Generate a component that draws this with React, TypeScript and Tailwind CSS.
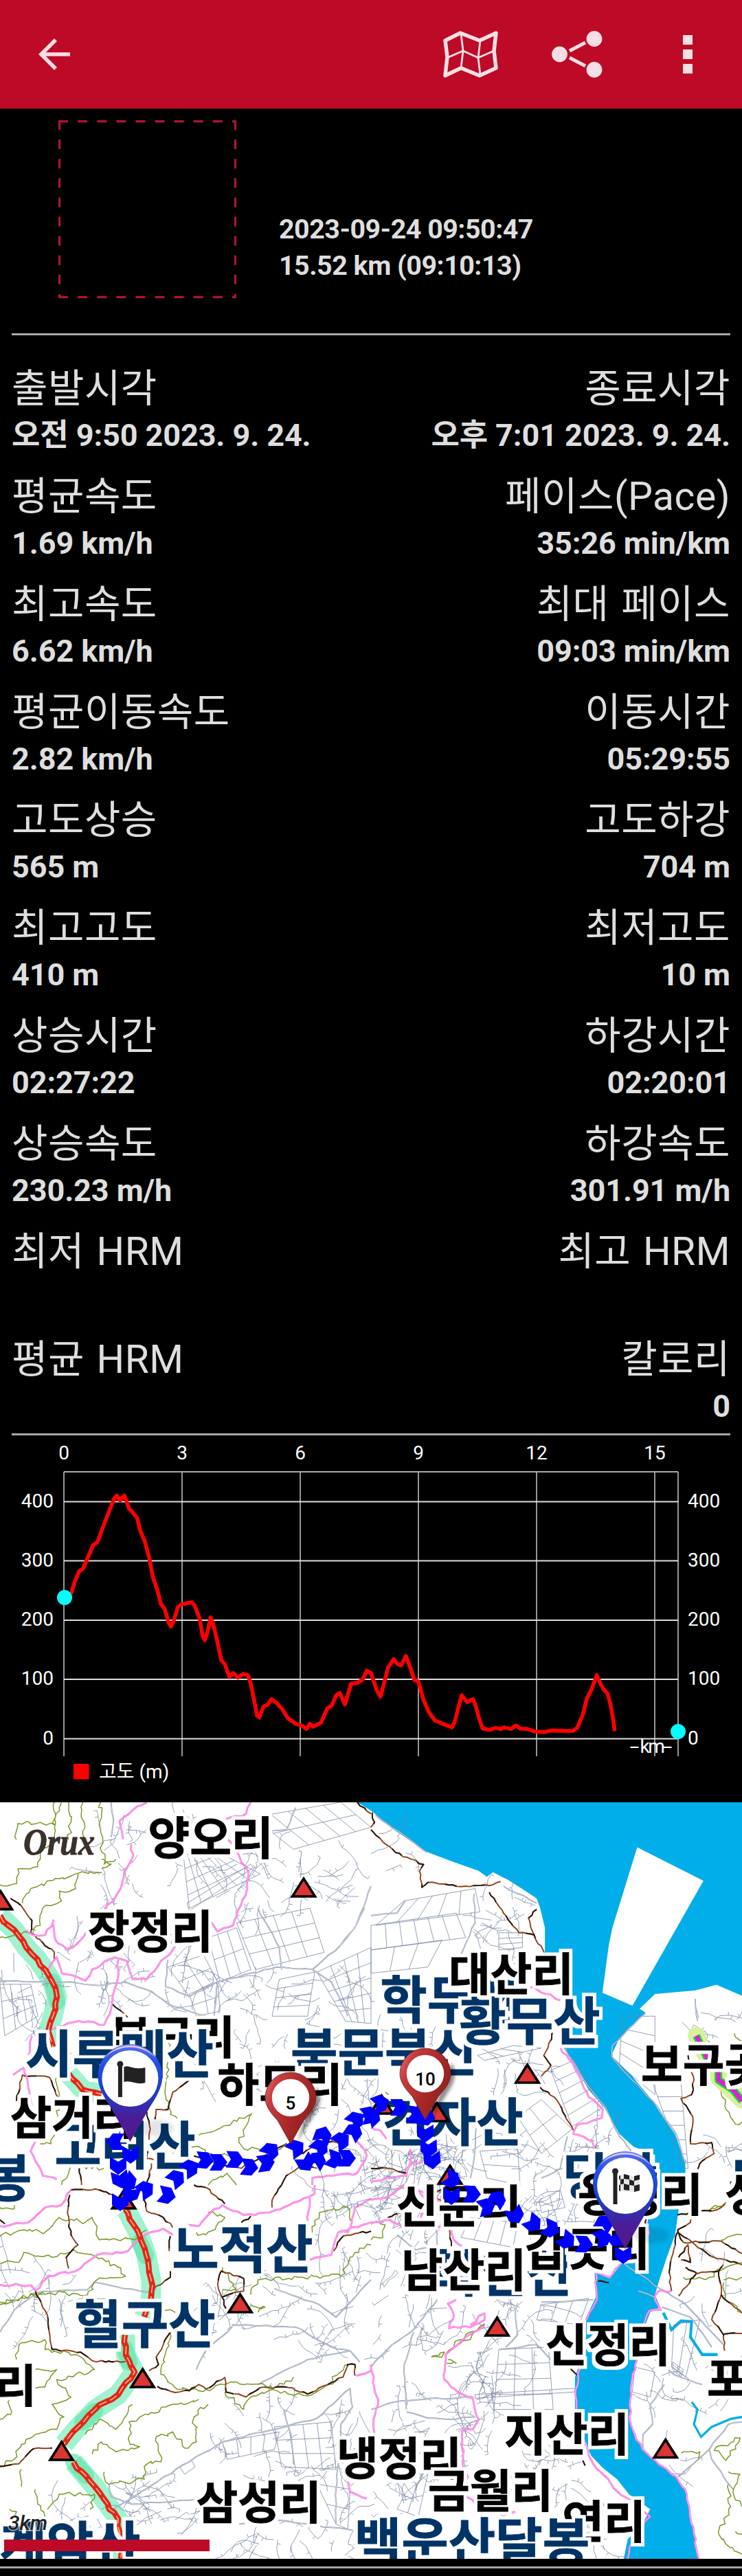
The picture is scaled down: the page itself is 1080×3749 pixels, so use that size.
import React from "react";

type Pt = [number, number];

/* ---------- helpers for the hand-drawn map geometry ---------- */

function makeRandom(seed: number) {
  let s = seed;
  return () => {
    s = (s * 16807) % 2147483647;
    return s / 2147483647;
  };
}

function toPoints(text: string): Pt[] {
  return text.split(" ").map((p) => p.split(",").map(Number) as Pt);
}

/** Turns a coarse polyline into an irregular one, like a path in the hills. */
function wiggle(text: string, amp: number, step = 22): string {
  const pts = toPoints(text);
  const rnd = makeRandom(Math.round(pts[0][0] * 7 + pts[0][1] * 13 + 911));
  let d = `M${pts[0][0]},${pts[0][1]}`;
  for (let i = 1; i < pts.length; i++) {
    const [ax, ay] = pts[i - 1];
    const [bx, by] = pts[i];
    const n = Math.max(1, Math.round(Math.hypot(bx - ax, by - ay) / step));
    for (let k = 1; k <= n; k++) {
      const t = k / n;
      const j = k === n ? 0 : amp;
      const x = ax + (bx - ax) * t + (rnd() - 0.5) * 2 * j;
      const y = ay + (by - ay) * t + (rnd() - 0.5) * 2 * j;
      d += `L${x.toFixed(1)},${y.toFixed(1)}`;
    }
  }
  return d;
}

/** Rice-field grid spanned between four corners. */
function grid(corners: string, n: number, m: number): string {
  const [a, b, c, e] = toPoints(corners);
  const mix = (p: Pt, q: Pt, t: number): Pt => [p[0] + (q[0] - p[0]) * t, p[1] + (q[1] - p[1]) * t];
  let d = "";
  for (let i = 0; i <= n; i++) {
    const p = mix(a, b, i / n);
    const q = mix(e, c, i / n);
    d += `M${p[0].toFixed(1)},${p[1].toFixed(1)}L${q[0].toFixed(1)},${q[1].toFixed(1)}`;
  }
  for (let i = 0; i <= m; i++) {
    const p = mix(a, e, i / m);
    const q = mix(b, c, i / m);
    d += `M${p[0].toFixed(1)},${p[1].toFixed(1)}L${q[0].toFixed(1)},${q[1].toFixed(1)}`;
  }
  return d;
}

/** Village lanes: short branching strokes scattered in a box. */
function lanes(x: number, y: number, w: number, h: number, count: number, seed: number): string {
  const rnd = makeRandom(seed * 7919);
  let d = "";
  for (let i = 0; i < count * 0.8; i++) {
    let px = x + rnd() * w;
    let py = y + rnd() * h;
    let a = rnd() * Math.PI * 2;
    d += `M${px.toFixed(1)},${py.toFixed(1)}`;
    const n = 3 + Math.floor(rnd() * 5);
    for (let k = 0; k < n; k++) {
      a += (rnd() - 0.5) * 1.1;
      const l = 10 + rnd() * 26;
      px += Math.cos(a) * l;
      py += Math.sin(a) * l;
      d += `L${px.toFixed(1)},${py.toFixed(1)}`;
      if (rnd() > 0.6) {
        const b = a + (rnd() > 0.5 ? 1.5 : -1.5);
        d += `l${(Math.cos(b) * 14).toFixed(1)},${(Math.sin(b) * 14).toFixed(1)}M${px.toFixed(1)},${py.toFixed(1)}`;
      }
    }
  }
  return d;
}

/* The map sheet is made of four tiles, each with its own units. */
const NW = "matrix(0.3444 0 0 0.3571 0 -3)";
const NE = "matrix(0.3444 0 0 0.3571 540 -3)";
const SW = "matrix(0.3444 0 0 0.36288 0 557)";
const SE = "matrix(0.3444 0 0 0.36288 540 557)";

type Tile = {
  t: string;
  fields: string[];
  olive: string[];
  brown: string[];
  pink: string[];
  road: string[];
};

const TILES: Tile[] = [
  {
    t: NW,
    fields: [
      grid("775,225 880,190 1100,300 800,440", 6, 4),
      grid("790,420 1060,260 1070,275 800,450", 1, 1),
      grid("1000,500 1310,440 1370,620 1080,690", 4, 3),
      grid("1070,70 1440,8 1568,110 1240,200", 5, 2),
      grid("1340,700 1568,600 1568,910 1460,900", 4, 5),
      grid("1180,730 1330,700 1300,880 1150,880", 1, 4),
      grid("800,790 920,740 930,860 830,880", 2, 2),
      grid("0,750 130,750 160,880 20,960", 3, 3),
      grid("880,560 1000,520 1060,690 930,740", 3, 2),
      grid("710,680 860,630 920,740 800,800", 2, 2),
      lanes(420, 20, 500, 420, 34, 11),
      lanes(900, 200, 620, 260, 44, 12),
      lanes(270, 470, 650, 400, 46, 13),
      lanes(900, 720, 650, 300, 46, 14),
      lanes(0, 640, 180, 380, 18, 15),
      lanes(800, 1050, 760, 230, 30, 16),
      lanes(1320, 1380, 240, 180, 14, 17),
    ],
    olive: [
      "0,345 70,340 75,280 160,270 170,220 230,160 235,90 260,10",
      "70,160 75,95 170,90 230,100 230,8",
      "290,160 300,90 290,8",
      "350,8 355,170",
      "425,8 425,130 440,260 490,240",
      "95,420 130,360 250,320 320,300 430,295",
      "140,540 170,510 180,440 260,410 250,370 320,360 330,300",
      "430,280 470,260 430,240",
      "0,560 90,545 150,530",
      "300,1030 290,1090",
      "700,970 720,1000 700,1160 720,1280 770,1300",
      "1065,1275 1010,1395 1030,1420 1160,1430 1210,1400",
      "840,1365 900,1350 960,1325 1060,1280",
      "240,1130 245,1290 215,1400 170,1400",
      "260,1568 300,1490 440,1500",
      "730,1440 800,1400 890,1440 1000,1450",
      "880,1568 960,1520 1000,1568",
    ],
    brown: [
      "45,400 90,430 135,490 130,540 180,580 230,620 230,650",
      "475,830 540,885",
      "70,1225 95,1120 210,1130 245,1210",
      "800,1140 730,1190 710,1260 660,1260 655,1300",
      "620,1270 635,1340 620,1460 650,1465",
      "620,1568 640,1480",
      "335,1500 345,1568",
      "820,1450 920,1480 1020,1500 1210,1400 1280,1440 1350,1390 1470,1400",
      "1510,8 1568,55",
      "1190,1568 1210,1530 1280,1490 1340,1500",
    ],
    pink: [
      "620,10 580,25 505,85 520,160",
      "555,180 560,235 525,290 510,360 480,410 440,445",
      "1060,8 1040,55 945,80",
      "955,140 1000,210 1050,290 1045,360 1005,450 985,510 920,535 885,490",
      "110,530 140,550 190,550 225,490 235,570 280,605 320,590 400,500",
      "205,690 240,640 260,705 360,735 390,690 485,640 535,655 560,730 620,730 700,640 740,595",
      "500,650 495,740 475,820 465,870 440,915 330,900 205,935",
      "135,960 120,1040",
      "55,1120 100,1090 130,1230 150,1270",
      "150,1390 130,1430 180,1530 240,1545",
      "1500,1370 1550,1450 1510,1520 1320,1540 1320,1568",
    ],
    road: [
      "0,735 130,740 300,740 420,755 530,740 640,780 710,830 870,880",
      "710,650 700,760 800,800 920,740 1170,680 1320,690 1440,590 1500,520 1568,350",
      "1090,440 1180,600 1190,690",
      "1440,590 1510,500 1540,440",
      "920,740 905,880",
      "1320,690 1400,740 1470,880",
      "1060,70 1095,130 1210,120 1250,30",
      "470,8 480,80 470,150",
    ],
  },
  {
    t: NE,
    fields: [
      grid("0,510 360,460 400,560 0,610", 6, 1),
      grid("140,410 440,360 460,455 20,510", 5, 1),
      grid("0,610 300,570 240,680 0,705", 3, 1),
      grid("1060,880 1200,880 1200,1200 1050,1080", 1, 4),
      grid("1190,1150 1310,1150 1340,1500 1320,1500", 1, 6),
      grid("760,1100 860,1060 980,1250 850,1330", 1, 5),
      grid("620,1290 720,1220 850,1340 720,1440", 2, 2),
      grid("450,1040 600,1000 720,1010 480,1060", 3, 1),
      grid("460,1430 620,1420 630,1568 490,1540", 1, 2),
      grid("540,540 640,540 640,600 540,610", 1, 3),
      lanes(440, 380, 180, 230, 20, 21),
      lanes(0, 880, 350, 250, 20, 22),
      lanes(500, 1040, 280, 160, 16, 23),
      lanes(0, 1400, 420, 165, 80, 24),
      lanes(640, 1380, 400, 180, 22, 25),
      lanes(1230, 830, 320, 150, 8, 26),
      lanes(1400, 1380, 150, 60, 8, 27),
      lanes(0, 120, 150, 200, 6, 28),
    ],
    olive: [
      "1535,950 1568,985",
      "1480,1170 1500,1260 1540,1320 1568,1310",
      "60,1190 75,1200",
    ],
    brown: [
      "0,120 50,170 135,230 222,262 205,290 215,355 240,335 380,352 500,348 548,332",
      "500,375 560,460 625,540 690,550 735,628",
      "700,445 665,480 690,550",
      "775,935 730,1040 760,1080 720,1125",
      "715,1170 775,1210 855,1345",
      "0,1500 60,1498 150,1520",
      "1340,1040 1365,1140 1355,1200 1310,1215 1360,1290 1350,1400 1440,1395 1450,1440 1400,1470 1375,1515",
      "5,50 15,90 0,110",
      "1390,965 1435,990",
    ],
    pink: [
      "640,760 700,770 800,815",
      "800,1005 860,1090 920,1210 980,1260 975,1295 870,1325 855,1360 935,1390 945,1420",
      "0,1335 40,1345 65,1380",
      "170,1410 165,1480 150,1530 0,1555",
      "250,1005 285,1010",
      "160,1490 220,1470",
    ],
    road: [
      "20,60 235,212",
      "560,350 700,420",
      "820,1010 900,1140 990,1250 1050,1370 1100,1430",
      "1160,868 1020,1000 1020,1050 1190,1225 1290,1360 1330,1480",
      "0,470 110,460 145,410",
      "435,380 440,500 380,630",
      "1370,810 1380,900",
      "830,1370 800,1500 720,1540",
      "445,1330 440,1420 420,1540",
    ],
  },
  {
    t: SW,
    fields: [
      grid("1160,970 1400,950 1420,1140 1190,1130", 4, 3),
      grid("1340,1200 1480,1220 1470,1380 1420,1360", 1, 2),
      grid("760,1130 810,1105 825,1130 780,1160", 1, 1),
      grid("940,1030 1180,990 1160,1060 960,1100", 4, 1),
      lanes(850, 360, 700, 360, 60, 31),
      lanes(940, 900, 620, 290, 50, 32),
      lanes(520, 1170, 330, 180, 32, 33),
      lanes(0, 350, 420, 180, 22, 34),
      lanes(1000, 1350, 500, 140, 26, 35),
      lanes(1350, 0, 210, 140, 14, 36),
      lanes(250, 1290, 200, 60, 10, 37),
    ],
    olive: [
      "0,90 60,95 60,70 0,60",
      "0,205 100,180 190,190 250,130 360,150 390,130 420,220 480,215 570,220 620,180",
      "0,315 80,310 100,270 220,290 310,260 390,280 500,330 530,365 410,380 370,440 180,430 0,470",
      "0,480 90,450 180,440",
      "70,700 80,640 190,620 190,660 320,680 400,740 240,780 300,850 220,880 270,930 240,980 150,1000 90,1040 60,1100 0,1130",
      "150,740 240,740 190,810 150,815",
      "40,860 45,920 0,940",
      "640,480 740,510 680,760 750,820 870,820 1000,790 1170,810 1240,770",
      "840,860 700,890 545,950 550,1040 590,1050 490,1070 430,1030 390,1080",
      "880,880 820,930 830,1030 780,1055 730,990 660,1010 680,1110 620,1120 610,1180 460,1200 440,1150",
      "150,1220 160,1280 190,1330",
      "200,1300 250,1240 400,1240 380,1300",
      "40,1300 70,1310 60,1330",
      "1060,440 1090,380 1280,370 1440,365 1500,270 1568,240",
      "940,330 1000,420 940,420",
      "1060,480 1120,490 1090,510",
      "1320,190 1350,110 1470,90 1490,150",
      "830,190 870,200 950,130 880,110",
      "950,830 1030,900 1060,850 1170,825 1300,845 1390,800 1470,720",
      "90,1140 90,1210",
      "560,880 490,980 420,940 360,1000",
    ],
    brown: [
      "295,40 285,110 300,200 330,240 280,290 290,335",
      "150,425 200,520 220,660 340,670 390,705 530,708",
      "0,1128 80,1118 140,1058 220,1055",
      "665,808 740,832 800,825 840,800 870,818 950,772 955,830 1040,850 1100,812 1220,812 1300,838 1450,770 1470,720 1500,720 1500,765",
      "720,590 690,640 660,690 670,720 630,745",
      "720,345 720,370 650,415",
      "610,40 620,105 690,130 730,170",
      "720,205 715,265",
      "955,495 920,400 935,345 1030,375 1030,425 935,450",
      "1190,0 1150,60 1150,90",
      "820,0 870,10 950,75",
      "1020,150 1060,125",
      "1568,185 1450,205 1410,265",
      "300,20 420,20 480,40",
      "0,140 20,155",
    ],
    pink: [
      "0,165 120,150 190,90 260,80 300,20",
      "0,400 130,402 150,422 210,365 330,340 410,280 540,265 620,195 690,175 730,200",
      "795,160 840,165 890,110 940,80 1030,120 1140,110 1330,35 1330,0",
      "1300,145 1310,40",
      "1568,55 1500,90 1470,190 1430,190 1400,280 1310,300",
      "1430,190 1568,150",
      "1505,765 1568,745",
      "1470,1180 1480,1230 1550,1258",
    ],
    road: [
      "0,590 60,500 160,430 370,420 400,390 620,430 660,415",
      "980,560 1250,570 1400,650 1480,665 1520,710",
      "1480,815 1340,935 940,1030 800,1110 460,1310",
      "1480,815 1490,890 1440,960 1420,1220 1420,1360",
      "460,1200 470,1250 560,1280 830,1260",
      "1010,1360 1180,1345 1490,1385",
      "1160,415 1260,450 1350,480 1420,530 1568,380",
      "830,740 870,660 980,570",
      "1200,900 1230,1000 1240,1120",
      "1090,800 1300,700 1480,665",
    ],
  },
  {
    t: SE,
    fields: [
      grid("540,660 750,650 770,900 520,900", 3, 4),
      grid("440,840 860,815 860,830 440,855", 4, 1),
      grid("420,130 620,150 600,250 380,210", 4, 1),
      grid("720,480 920,455 880,560 700,540", 3, 1),
      grid("710,60 800,20 820,90 720,110", 2, 2),
      grid("1280,560 1390,540 1330,770 1270,730", 2, 1),
      grid("1115,730 1200,750 1180,850 1105,830", 1, 1),
      grid("150,1230 240,1160 200,1330 110,1300", 2, 2),
      grid("1275,710 1320,740 1310,770 1275,740", 2, 3),
      lanes(0, 0, 330, 110, 50, 41),
      lanes(20, 160, 240, 300, 26, 42),
      lanes(0, 480, 320, 180, 16, 43),
      lanes(480, 480, 240, 240, 26, 44),
      lanes(100, 850, 460, 160, 40, 45),
      lanes(380, 720, 160, 130, 18, 46),
      lanes(620, 1040, 230, 200, 24, 47),
      lanes(0, 1180, 250, 140, 20, 48),
      lanes(1150, 740, 400, 120, 20, 49),
      lanes(660, 30, 220, 120, 18, 50),
      lanes(930, 1360, 110, 110, 8, 51),
      lanes(1230, 1080, 130, 60, 4, 52),
      lanes(1330, 180, 230, 380, 8, 53),
    ],
    olive: [
      "315,680 350,650 420,620 480,560 400,600 350,645",
      "255,690 310,670 300,690 260,690",
      "325,700 360,715 320,715",
      "1310,1075 1390,1070 1385,1100",
      "1450,1065 1560,1015 1500,1105 1450,1065",
      "1510,1150 1560,1160 1530,1230 1568,1290",
      "1510,1200 1520,1290 1470,1400 1500,1440 1568,1480",
      "1540,1390 1568,1400",
      "0,150 60,160 50,210 0,220",
      "1320,370 1430,370 1500,330 1568,310",
      "1490,390 1510,470 1568,510",
      "1430,100 1500,70 1430,110",
      "1480,220 1568,200",
      "1490,380 1568,370",
    ],
    brown: [
      "330,0 260,40 130,110 70,130",
      "230,30 320,80 340,245",
      "1295,120 1350,110 1350,150 1295,180",
      "1295,180 1320,230 1480,225 1568,275",
      "1295,190 1370,240 1450,290 1568,320",
      "1295,190 1260,350 1270,425",
      "1300,290 1340,240 1350,310 1310,300",
      "1330,330 1380,355 1470,345 1490,320",
      "1375,355 1300,445",
      "1470,345 1480,440 1440,540 1490,600 1495,665",
      "1480,440 1568,515",
      "1490,598 1568,595",
      "1390,105 1460,100 1495,75",
      "960,385 1005,392",
      "840,730 875,765",
      "895,1105 905,1125",
      "1165,130 1160,160",
    ],
    pink: [
      "0,60 60,50 140,0",
      "180,0 230,60 210,130 170,170 80,140 0,155",
      "200,20 330,90 300,170 255,170 220,60",
      "340,175 350,220 385,245",
      "360,460 325,475 350,520 330,575 420,570 480,540 480,515 420,560",
      "480,565 400,610 315,680 310,780 370,835 430,855 455,940 430,980 385,985 390,1130 410,1170 375,1225 470,1300 560,1325 610,1310",
      "0,720 30,880 10,960 15,1000",
      "1060,310 1010,370 950,350 955,460 905,550 890,700 865,820 865,960 900,1020 940,1120 1060,1245 1100,1265",
      "1165,150 1175,190 1165,215",
      "1270,425 1215,425 1200,460 1225,500 1175,505 1150,570",
      "1125,700 1100,800 1095,950 1120,1020 1180,1090 1290,1170 1335,1240 1365,1400 1385,1498",
      "1140,1305 1180,1330 1145,1365 1110,1400 1085,1498",
    ],
    road: [
      "1070,315 1220,415 1330,480 1440,590 1490,640",
      "1130,425 1200,450",
      "1230,490 1350,530 1440,650",
      "0,730 90,640 180,580 280,460",
      "180,590 140,720 150,900",
      "0,900 100,870 220,860 430,850",
      "150,910 240,935 330,940 440,930",
      "540,660 700,640 760,700",
      "610,500 620,600 570,650",
      "1150,1060 1150,1000 1190,960 1180,880 1240,800",
      "1200,700 1280,760 1400,800",
      "1430,1060 1440,1100 1530,1220",
      "1568,950 1510,960 1430,1060 1300,1170",
      "720,470 940,460",
      "180,10 0,20",
      "280,180 280,240 190,260 110,200",
    ],
  },
];

type Label = { s: string; x: number; y: number; blue?: boolean; a?: "start" | "end" };

const LABELS: Label[] = [
  { s: "부근리", x: 251, y: 366 },
  { s: "시루메산", x: 174, y: 394, blue: true },
  { s: "북문북산", x: 560, y: 391, blue: true },
  { s: "고려산", x: 182, y: 527, blue: true },
  { s: "봉", x: 12, y: 574, blue: true },
  { s: "노적산", x: 353, y: 678, blue: true },
  { s: "혈구산", x: 211, y: 787, blue: true },
  { s: "계암산", x: 102, y: 1109, blue: true },
  { s: "학두산", x: 656, y: 315, blue: true },
  { s: "황무산", x: 771, y: 346, blue: true },
  { s: "견자산", x: 659, y: 493, blue: true },
  { s: "당산", x: 888, y: 573, blue: true },
  { s: "북인산", x: 732, y: 712, blue: true },
  { s: "문수산", x: 1060, y: 581, blue: true, a: "start" },
  { s: "양오리", x: 306.5, y: 76 },
  { s: "장정리", x: 219, y: 212 },
  { s: "하도리", x: 407.5, y: 435 },
  { s: "삼거리", x: 105.5, y: 483 },
  { s: "대산리", x: 744, y: 274 },
  { s: "보구곶리", x: 933, y: 406, a: "start" },
  { s: "신문리", x: 668, y: 612 },
  { s: "갑곳리", x: 855, y: 674 },
  { s: "남산리", x: 675, y: 705 },
  { s: "용정리", x: 932, y: 595 },
  { s: "성동리", x: 1055, y: 595, a: "start" },
  { s: "신정리", x: 885, y: 814 },
  { s: "지산리", x: 825, y: 944 },
  { s: "냉정리", x: 581, y: 979 },
  { s: "금월리", x: 714, y: 1026 },
  { s: "연리", x: 879, y: 1071 },
  { s: "포내리", x: 1029, y: 864, a: "start" },
  { s: "리", x: 53, y: 873, a: "end" },
  { s: "삼성리", x: 376.5, y: 1043 },
  { s: "백운산달봉", x: 687, y: 1104, blue: true },
];

const PEAKS: Pt[] = [
  [442, 107], [1, 125.6], [767.6, 378], [349.5, 712], [207.6, 821], [89.5, 927], [723.5, 746], [968.7, 923.5],
];

const PEAKS_ON_TRACK: Pt[] = [[555.5, 423], [636, 434], [655, 525], [180, 561]];

/* x, y, heading in degrees */
const ARROWS: [number, number, number][] = [
  [168, 494, 180], [190, 513, 90], [172, 529, 90], [175, 549, 80], [187, 553, 50], [190, 570, 110], [175, 582, 90],
  [212, 563, -35], [243, 572, 12], [257, 547, -40], [277, 532, -32], [298, 521, 5], [318, 524, 0], [342, 520, 2],
  [363, 531, 5], [387, 525, -8], [394, 507, -45], [431, 503, -35], [445, 525, 60], [462, 520, -60], [470, 484, -70],
  [466, 502, -40], [487, 520, 20], [497, 492, -35], [505, 518, 0], [515, 479, -55], [518, 462, -40], [538, 455, -12],
  [554, 438, -20], [542, 457, -45], [581, 444, 0], [605, 455, 10], [621, 458, 10], [619, 482, 90], [624, 504, 88],
  [629, 521, 85], [658, 549, 25], [657, 573, 90], [687, 570, 2], [708, 589, -15], [724, 577, -60], [750, 601, 65],
  [776, 613, 40], [802, 621, 25], [825, 638, 40], [850, 643, 2], [877, 634, -20], [880, 612, -60], [898, 635, 50],
  [907, 659, 90],
];

function Peak({ x, y }: { x: number; y: number }) {
  return (
    <path
      d={`M${x},${y + 4}L${x + 16.5},${y + 30}H${x - 16.5}Z`}
      fill="#dd3434"
      stroke="#000"
      strokeWidth="3.6"
    />
  );
}

function EndPin({ x, y, children }: { x: number; y: number; children: React.ReactNode }) {
  return (
    <g transform={`translate(${x} ${y})`}>
      <ellipse cx="38" cy="72" rx="26" ry="12" fill="#000" opacity="0.1" filter="url(#soft)" />
      <path d="M-47,-3A47,47 0 1 1 47,-3C47,14 36,30 29,41L0,92L-29,41C-36,30 -47,14 -47,-3Z" fill="url(#pinBlue)" />
      <path d="M-38,-29A47,47 0 0 1 38,-29A52,52 0 0 0 -38,-29Z" fill="#e3c4f4" />
      <circle r="41" fill="#fff" />
      <rect x="-17.500" y="-18" width="6" height="45" fill="#222" />
      <circle cx="-14.500" cy="-21" r="4.500" fill="#222" />
      {children}
    </g>
  );
}

function KmPin({ x, y, n }: { x: number; y: number; n: string }) {
  return (
    <g transform={`translate(${x} ${y})`}>
      <path d="M10,64L36,22C44,8 46,-4 38,-16L20,30Z" fill="#000" opacity="0.45" filter="url(#soft)" />
      <path d="M-37,0A37,37 0 1 1 37,0C37,14 26,25 19,33L0,67L-19,33C-26,25 -37,14 -37,0Z" fill="url(#pinRed)" stroke="#7a1c1c" strokeWidth="0.8" />
      <circle r="27.200" fill="#fff" />
      <text y="17" textAnchor="middle" fontSize="26" className="font-['Roboto',sans-serif] font-medium">
        {n}
      </text>
    </g>
  );
}

const RIDGE = [
  "0,165 21,186 38,211 55,229 76,261 83,283 77,311 70,333 77,356",
  "100,395 120,418 148,425",
  "182,592 186,597 203,630 213,659 220,695 220,720 210,749",
  "182,775 183,804 196,829 172,862 138,884 114,909 93,934",
  "107,960 138,996 172,1043 176,1101",
];

function TrackMap() {
  return (
    <svg viewBox="0 0 1080 1101" className="block h-[1101px] w-full bg-white" role="img" aria-label="track map">
      <defs>
        <linearGradient id="pinBlue" x1="0" y1="0" x2="0" y2="1">
          <stop offset="0" stopColor="#5b74ee" />
          <stop offset="0.2" stopColor="#2450e4" />
          <stop offset="0.5" stopColor="#1c3fc4" />
          <stop offset="0.75" stopColor="#4a1c98" />
          <stop offset="1" stopColor="#551a86" />
        </linearGradient>
        <linearGradient id="pinRed" x1="0" y1="0" x2="1" y2="0.600">
          <stop offset="0" stopColor="#e77474" />
          <stop offset="0.25" stopColor="#c43c3c" />
          <stop offset="0.7" stopColor="#a52626" />
          <stop offset="1" stopColor="#8e2020" />
        </linearGradient>
        <filter id="soft" x="-40%" y="-40%" width="180%" height="180%">
          <feGaussianBlur stdDeviation="2.500" />
        </filter>
        <filter id="halo" x="-5%" y="-10%" width="110%" height="120%" colorInterpolationFilters="sRGB">
          <feMorphology in="SourceAlpha" operator="dilate" radius="5" result="fat" />
          <feFlood floodColor="#fff" />
          <feComposite in2="fat" operator="in" result="white" />
          <feMerge>
            <feMergeNode in="white" />
            <feMergeNode in="SourceGraphic" />
          </feMerge>
        </filter>
      </defs>

      {/* estuary */}
      <g transform={NE}>
        <path
          fill="#02aeea"
          d="M-58,8L0,42L100,122L235,210L330,245L455,288L490,312L515,293L580,325L640,362L700,400L715,440L735,520L735,630L800,700L830,790L850,880L830,960L815,1010L860,1080L920,1180L985,1250L1050,1360L1110,1412L1200,1445V1568H1330L1328,1480L1285,1360L1240,1300L1190,1225L1100,1120L1015,1040L1050,970L1160,865L1135,850L1200,790L1370,775L1460,752L1568,797V8Z"
        />
        <path fill="#fff" d="M1125,192L1405,328L1105,837L978,785L1005,590L1020,520Z" />
      </g>
      <g transform={SE}>
        <path
          fill="#02aeea"
          d="M1200,-3L1170,140L1165,220L1110,270L1060,312L1010,375L945,350L950,450L905,540L888,700L862,770L862,900L890,990L930,1085L980,1135L1040,1180L1090,1240L1180,1300L1145,1365L1085,1420L1068,1500H1385L1365,1400L1335,1240L1290,1170L1180,1090L1120,1020L1095,950L1100,800L1125,690L1160,560L1180,510L1222,490L1200,440L1222,370L1250,290L1285,200L1300,100L1325,-3Z"
        />
        <path d="M1235,512L1270,580L1310,545L1355,548L1350,610L1400,680L1465,680" fill="none" stroke="#02aeea" strokeWidth="12" />
        <path d="M1355,870L1380,900L1365,960L1395,1010L1440,970L1520,938L1568,930" fill="none" stroke="#02aeea" strokeWidth="9" />
      </g>
      <g transform={NW}>
        <path d="M1510,8L1568,40V8Z" fill="#02aeea" />
      </g>

      <path d={RIDGE.map((r) => wiggle(r, 0)).join("")} fill="none" stroke="#9ff3cf" strokeWidth="29" strokeLinejoin="round" />
      <path d="M76,261L83,290M203,640L212,660M182,795L188,815M120,902L138,886M107,960L125,980" fill="none" stroke="#62e5ac" strokeWidth="24" strokeLinecap="round" opacity="0.7" />

      {TILES.map((tile) => (
        <g key={tile.t} transform={tile.t} fill="none" strokeLinejoin="round">
          <path d={tile.fields.join("")} stroke="#74839f" strokeWidth="2.200" />
          <path d={tile.road.map((r) => wiggle(r, 3, 30)).join("")} stroke="#8b97ae" strokeWidth="5.500" />
          <path d={tile.road.map((r) => wiggle(r, 3, 30)).join("")} stroke="#e7eaf0" strokeWidth="2" />
          <path d={tile.olive.map((r) => wiggle(r, 9, 16)).join("")} stroke="#789826" strokeWidth="4.200" />
          <path d={tile.brown.map((r) => wiggle(r, 4, 18)).join("")} stroke="#8a431f" strokeWidth="5.500" />
          <path d={tile.brown.map((r) => wiggle(r, 4, 18)).join("")} stroke="#2b1a10" strokeWidth="5.500" strokeDasharray="50 70" />
          <path d={tile.pink.map((r) => wiggle(r, 5, 22)).join("")} stroke="#fb6fe0" strokeWidth="8" />
          <path d={tile.pink.map((r) => wiggle(r, 5, 22)).join("")} stroke="#ffd3f6" strokeWidth="2.200" />
        </g>
      ))}

      {/* ridge trail */}
      {RIDGE.map((part) => {
        const d = wiggle(part, 2, 10);
        return (
          <g key={part} fill="none" strokeLinejoin="round">
            <path d={d} stroke="#e5251b" strokeWidth="8.500" />
            <path d={d} stroke="#ffc27c" strokeWidth="1.600" strokeDasharray="12 5" />
          </g>
        );
      })}

      {/* trail east of the strait */}
      <g transform={NE} fill="none" strokeLinejoin="round">
        <path d="M1375,960L1420,1050L1470,1130L1568,1220" stroke="#d8efa0" strokeWidth="72" strokeLinecap="round" />
        <path d="M1375,960L1420,1050L1468,1100V1140L1530,1180L1568,1225" stroke="#12d928" strokeWidth="32" />
        <path d="M1375,960L1420,1050L1468,1100V1140L1530,1180L1568,1225" stroke="#ee10ee" strokeWidth="17" />
      </g>

      {PEAKS.map(([x, y]) => (
        <Peak key={`${x}-${y}`} x={x} y={y} />
      ))}

      {LABELS.map((l) => (
        <text
          key={l.s + l.x}
          x={l.x}
          y={l.y}
          textAnchor={l.a ?? "middle"}
          fontSize={l.blue ? 74.5 : 66}
          fill={l.blue ? "#003366" : "#000"}
          stroke={l.blue ? "#003366" : "#000"}
          strokeWidth="0.8"
          filter="url(#halo)"
          className="font-['Noto_Sans_CJK_KR',sans-serif] font-bold"
        >
          {l.s}
        </text>
      ))}

      {PEAKS_ON_TRACK.map(([x, y]) => (
        <Peak key={`${x}-${y}`} x={x} y={y} />
      ))}

      {ARROWS.map(([x, y, r]) => (
        <path
          key={`${x}-${y}`}
          d="M-13,-12H4L13,0L4,12H-13L-6,0Z"
          transform={`translate(${x} ${y}) rotate(${r})`}
          fill="#0000ff"
        />
      ))}

      <KmPin x={423} y={430} n="5" />
      <KmPin x={619} y={395} n="10" />
      <EndPin x={189.400} y={402}>
        <path d="M-9,-17C0,-20 4,-12 22,-16V6C10,10 2,2 -9,5Z" fill="#222" />
      </EndPin>
      <EndPin x={910} y={558}>
        <path d="M-9,-15C0,-19 8,-10 21,-16V7C8,12 0,5 -9,9Z" fill="#e6e6e6" />
        <path
          d="M-2,-17L6,-15V-9L-2,-10ZM13,-14L21,-16V-9L13,-7ZM-9,-9L-2,-10V-3L-9,-1ZM6,-9L13,-7V0L6,-1ZM-2,-3L6,-1V7L-2,6ZM13,0L21,-2V7L13,9ZM-9,7L-7,8V-15L-9,-14Z"
          fill="#222"
        />
      </EndPin>

      <text x="34" y="76" fontSize="54" textLength="104" lengthAdjust="spacingAndGlyphs" fill="#3a302c" stroke="#3a302c" strokeWidth="1" className="font-['Liberation_Serif',serif] font-bold italic">
        Orux
      </text>
      <text x="12" y="1059" fontSize="30" fill="#222" stroke="#fff" strokeOpacity="0.6" strokeWidth="3" paintOrder="stroke" className="font-['Roboto',sans-serif] font-medium italic">
        3km
      </text>
      <rect x="6" y="1073" width="299" height="17" fill="#bd0a26" />
    </svg>
  );
}

/* ---------- elevation profile ---------- */

const PROFILE =
  "150,700 158,650 167,608 176,595 184,558 197,500 206,488 217,430 232,355 241,312 247,298 254,318 263,298 268,325 273,352 281,368 290,390 296,440 306,485 315,550 323,630 332,680 340,740 348,760 356,815 361,832 367,810 376,752 384,742 405,733 411,745 422,800 428,870 433,888 439,850 445,795 451,825 460,900 468,970 475,985 485,1038 493,1022 503,1040 514,1025 524,1030 530,1065 539,1150 543,1195 548,1203 557,1158 566,1150 574,1128 584,1142 597,1170 608,1205 625,1228 640,1238 648,1250 655,1228 661,1240 678,1225 692,1165 701,1155 710,1115 718,1102 729,1150 742,1065 755,1062 767,1047 775,1012 784,1022 796,1090 804,1118 812,1060 820,1000 832,965 840,985 848,990 858,952 866,995 876,1050 884,1055 895,1130 906,1180 919,1215 935,1228 955,1243 961,1220 969,1160 976,1112 987,1140 1000,1128 1006,1160 1013,1210 1020,1247 1035,1253 1048,1245 1058,1250 1065,1243 1080,1250 1090,1235 1100,1248 1115,1250 1130,1260 1150,1262 1165,1256 1210,1258 1220,1245 1232,1190 1240,1125 1250,1090 1261,1030 1268,1060 1275,1087 1284,1105 1290,1150 1296,1210 1299,1258";

const X_TICKS: Pt[] = [[0, 93], [3, 265], [6, 437], [9, 609], [12, 781], [15, 953]];
const Y_TICKS: Pt[] = [[400, 98.5], [300, 184.5], [200, 271], [100, 357], [0, 443.5]];

function Profile() {
  const d = "M" + toPoints(PROFILE).map(([x, y]) => `${(x / 1.4519).toFixed(1)},${(y / 2.8 - 17).toFixed(1)}`).join("L");
  return (
    <svg viewBox="0 0 1080 534" className="block h-[534px] w-full font-['Roboto','Noto_Sans_CJK_KR',sans-serif]">
      <g stroke="#a8a8a8" strokeWidth="1.800">
        {X_TICKS.map(([v, x]) => (
          <path key={v} d={`M${x},55V469`} />
        ))}
        <path d="M987,55V469" />
        <path d="M93,55H987" />
      </g>
      <g stroke="#dcdcdc" strokeWidth="1.800">
        {Y_TICKS.map(([v, y]) => (
          <path key={v} d={`M93,${y}H987`} />
        ))}
      </g>
      <g fill="#fff" fontSize="28">
        {X_TICKS.map(([v, x]) => (
          <text key={v} x={x} y="37" textAnchor="middle">{v}</text>
        ))}
        {Y_TICKS.map(([v, y]) => (
          <text key={v} x="78" y={y + 8} textAnchor="end">{v}</text>
        ))}
        {Y_TICKS.map(([v, y]) => (
          <text key={v} x="1001" y={y + 8}>{v}</text>
        ))}
        <text x="917" y="464" textLength="61">-- km--</text>
        <text x="144" y="501">고도 (m)</text>
      </g>
      <path d={d} fill="none" stroke="#ff0000" strokeWidth="5.600" strokeLinejoin="round" />
      <circle cx="94" cy="238" r="11" fill="#00ffff" />
      <circle cx="987" cy="433" r="11" fill="#00ffff" />
      <rect x="107" y="480" width="22.500" height="22.500" fill="#ff0000" />
    </svg>
  );
}

/* ---------- statistics ---------- */

const STATS: [string, string, string, string][] = [
  ["출발시각", "오전 9:50 2023. 9. 24.", "종료시각", "오후 7:01 2023. 9. 24."],
  ["평균속도", "1.69 km/h", "페이스(Pace)", "35:26 min/km"],
  ["최고속도", "6.62 km/h", "최대 페이스", "09:03 min/km"],
  ["평균이동속도", "2.82 km/h", "이동시간", "05:29:55"],
  ["고도상승", "565 m", "고도하강", "704 m"],
  ["최고고도", "410 m", "최저고도", "10 m"],
  ["상승시간", "02:27:22", "하강시간", "02:20:01"],
  ["상승속도", "230.23 m/h", "하강속도", "301.91 m/h"],
  ["최저 HRM", "", "최고 HRM", ""],
  ["평균 HRM", "", "칼로리", "0"],
];

function Stat({ label, value, right }: { label: string; value: string; right?: boolean }) {
  return (
    <div className={right ? "text-right" : "text-left"}>
      <div className="text-[57px] leading-[76px] tracking-[0.5px] [word-spacing:3px]">{label}</div>
      <div className="h-[60px] text-[45px] leading-[60px] font-bold tracking-[-0.1px]">{value}</div>
    </div>
  );
}

export default function App() {
  return (
    <div className="flex h-[3749px] w-[1080px] flex-col overflow-hidden bg-black font-['Roboto','Noto_Sans_CJK_KR',sans-serif] text-[#dedede]">
      <header className="flex h-[158px] shrink-0 items-center bg-[#bd0a26] pr-[72px] pl-[56px]">
        <svg viewBox="0 0 46 46" className="h-[46px] w-[46px]" fill="none" stroke="#fadde3" strokeWidth="5.600">
          <path d="M25,2L4,23L25,44M4.500,23H46" />
        </svg>
        <svg viewBox="0 0 80 68" className="ml-auto h-[68px] w-[80px]" fill="none" stroke="#f8dfe4" strokeLinejoin="round">
          <path d="M3,14L25,3L53,14L77,3L74,29L77,54L53,65L26,54L3,65L6,38Z" strokeWidth="5.500" />
          <path d="M26,4L29,29L26,54M54,14L51,39L54,64M6,39L29,29L51,39L74,29" strokeWidth="2.800" />
        </svg>
        <svg viewBox="0 0 74 68" className="ml-[78px] h-[68px] w-[74px]" fill="#f6dfe4">
          <path d="M26,29L49,17M26,39L49,51" stroke="#f6dfe4" strokeWidth="5" />
          <circle cx="11.500" cy="34" r="11.400" />
          <circle cx="62" cy="11.500" r="11.400" />
          <circle cx="62" cy="56.500" r="11.400" />
        </svg>
        <div className="mt-[-1px] ml-[117px] flex flex-col gap-[7px]">
          <div className="size-[14px] bg-[#f6dfe4]" />
          <div className="size-[14px] bg-[#f6dfe4]" />
          <div className="size-[14px] bg-[#f6dfe4]" />
        </div>
      </header>

      <section className="flex h-[327px] shrink-0 pt-[17px] pl-[85px]">
        <svg viewBox="0 0 259 259" className="size-[259px]" fill="none" stroke="#b0142f" strokeWidth="3.400">
          <path d="M0,1.500H259M0,257.500H259" strokeDasharray="14 14.100" />
          <path d="M1.500,0V259M257.500,0V259" strokeDasharray="14 14.100" />
        </svg>
        <div className="mt-[132px] ml-[62px] text-[39.4px] leading-[53px] font-bold tracking-[-0.5px]">
          <div>2023-09-24 09:50:47</div>
          <div>15.52 km (09:10:13)</div>
        </div>
      </section>

      <div className="mx-[17px] h-[3px] shrink-0 bg-[#a8a8a8]" />

      <section className="mt-[40px] h-[1558px] shrink-0 px-[17px]">
        {STATS.map(([a, b, c, e]) => (
          <div key={a} className="flex h-[157px] justify-between">
            <Stat label={a} value={b} />
            <Stat label={c} value={e} right />
          </div>
        ))}
      </section>

      <div className="mx-[17px] h-[3px] shrink-0 bg-[#a8a8a8]" />

      <div className="mt-[-2px] mb-[2px] shrink-0">
        <Profile />
      </div>
      <div className="shrink-0">
        <TrackMap />
      </div>
      <div className="mt-[11px] h-[3px] shrink-0 bg-[#a8a3a8]" />
    </div>
  );
}
